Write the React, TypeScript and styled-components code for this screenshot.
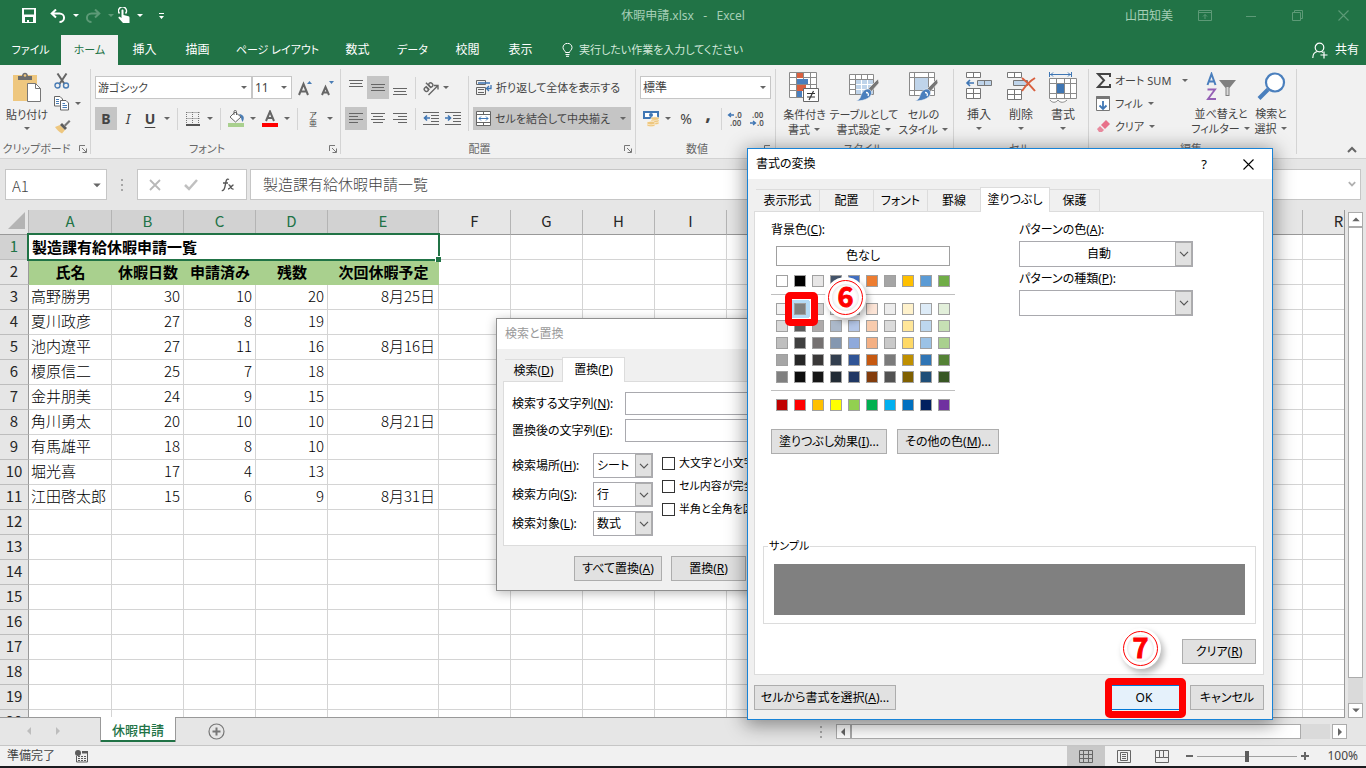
import React from "react";
import styled, { createGlobalStyle, css } from "styled-components";

const GlobalStyle = createGlobalStyle`
  *, *::before, *::after { box-sizing: border-box; }
  html, body { margin: 0; height: 100%; }
  body {
    font-family: "Noto Sans", "Noto Sans CJK JP", sans-serif;
    font-size: 12px;
    line-height: 16px;
    color: #444;
    font-feature-settings: "palt";
    overflow: hidden;
  }
  button, input, select {
    font: inherit;
    font-feature-settings: inherit;
    color: inherit;
    margin: 0;
    padding: 0;
    border: 0;
    border-radius: 0;
    background: none;
    outline: none;
  }
  svg { display: block; flex: none; }
`;

/* ---------- shell ---------- */

const Shell = styled.div`
  position: relative;
  display: flex;
  flex-direction: column;
  height: 100vh;
  overflow: hidden;
  background: #e6e6e6;
  border-bottom: 2px solid #1b1b1f;
`;

const TitleBar = styled.header`
  display: flex;
  align-items: center;
  height: 35px;
  padding-bottom: 4px;
  background: #217346;
  color: #a6cfb6;
  font-size: 12px;
`;

const TitleSide = styled.div<{ $end?: boolean }>`
  display: flex;
  flex: 1;
  align-items: center;
  padding-left: 14px;
  justify-content: ${(p) => (p.$end ? "flex-end" : "flex-start")};
`;

const TitleText = styled.h1`
  margin: 0;
  font-size: 12px;
  font-weight: 400;
  white-space: pre;
`;

const TitleButton = styled.button<{ $w: number; $dim?: boolean }>`
  display: flex;
  align-items: center;
  justify-content: center;
  width: ${(p) => p.$w}px;
  height: 26px;
  color: ${(p) => (p.$dim ? "#5d9a77" : "#fff")};
`;

const UserName = styled.span`
  margin-right: 9px;
`;

const TabBar = styled.nav`
  display: flex;
  align-items: stretch;
  height: 30px;
  background: #217346;
  color: #fff;
`;

const RibbonTab = styled.button<{ $w: number; $active?: boolean; $kana?: boolean }>`
  width: ${(p) => p.$w}px;
  font-size: ${(p) => (p.$kana ? 11 : 12)}px;
  white-space: nowrap;
  text-align: center;
  ${(p) => p.$active && css`background: #f1f1f1; color: #217346;`}
`;

const TellMe = styled.button`
  display: flex;
  align-items: center;
  gap: 6px;
  margin-left: 15px;
  font-size: 11px;
  color: #d3e8da;
  white-space: nowrap;
`;

const Share = styled.button`
  display: flex;
  align-items: center;
  gap: 7px;
  margin-left: auto;
  padding-right: 7px;
`;

/* ---------- ribbon ---------- */

const Ribbon = styled.section`
  display: flex;
  flex: none;
  height: 94px;
  padding: 4px 0;
  background: #f1f1f1;
  border-bottom: 1px solid #d2d2d2;
`;

const Group = styled.div<{ $w: number }>`
  display: flex;
  flex: none;
  flex-direction: column;
  justify-content: space-between;
  width: ${(p) => p.$w}px;
  height: 85px;
  border-right: 1px solid #d4d4d4;
`;

const GroupBody = styled.div<{ $pad?: number }>`
  display: flex;
  padding-left: ${(p) => p.$pad ?? 4}px;
`;

const GroupLabel = styled.div`
  display: flex;
  align-items: center;
  height: 11px;
  padding-right: 3px;
  font-size: 11px;
  color: #666;
`;

const GroupName = styled.span<{ $launch?: boolean }>`
  flex: 1;
  padding-right: ${(p) => (p.$launch ? 6 : 0)}px;
  text-align: center;
  white-space: nowrap;
`;

const ToolRows = styled.div`
  display: flex;
  flex-direction: column;
  gap: 8px;
  padding-top: 7px;
`;

const ToolRow = styled.div`
  display: flex;
  align-items: center;
  height: 23px;
`;

const Tool = styled.button<{ $w?: number; $active?: boolean; $raise?: boolean }>`
  display: flex;
  flex: none;
  align-items: center;
  justify-content: center;
  width: ${(p) => p.$w ?? 22}px;
  height: 23px;
  padding-bottom: ${(p) => (p.$raise ? 12 : 0)}px;
  background: ${(p) => (p.$active ? "#c5c5c5" : "transparent")};
`;

const Glyph = styled.span<{ $size?: number; $bold?: boolean; $italic?: boolean; $under?: boolean }>`
  font-family: "Noto Sans", sans-serif;
  font-size: ${(p) => p.$size ?? 14}px;
  font-weight: ${(p) => (p.$bold ? 700 : 400)};
  font-style: ${(p) => (p.$italic ? "italic" : "normal")};
  text-decoration: ${(p) => (p.$under ? "underline" : "none")};
  text-underline-offset: 3px;
`;

const Rule = styled.span<{ $m?: number; $tall?: boolean }>`
  flex: none;
  width: 1px;
  height: ${(p) => (p.$tall ? 55 : 22)}px;
  margin: 0 ${(p) => p.$m ?? 4}px;
  background: #d4d4d4;
`;

const WideTool = styled.button<{ $w?: number; $active?: boolean }>`
  display: flex;
  align-items: center;
  gap: 4px;
  width: ${(p) => (p.$w ? `${p.$w}px` : "auto")};
  height: 23px;
  padding: 0 4px 0 3px;
  font-size: 11px;
  white-space: nowrap;
  background: ${(p) => (p.$active ? "#c5c5c5" : "transparent")};
`;

const ToolText = styled.span`
  flex: 1;
  text-align: left;
`;

const ComboBox = styled.div<{ $w: number }>`
  display: flex;
  align-items: center;
  width: ${(p) => p.$w}px;
  height: 23px;
  padding-right: 3px;
  background: #fff;
  border: 1px solid #c6c6c6;
`;

const ComboSelect = styled.select<{ $kana?: boolean }>`
  flex: 1;
  min-width: 0;
  height: 100%;
  padding-left: 2px;
  font-size: ${(p) => (p.$kana ? 11 : 12)}px;
  appearance: none;
`;

const BigTool = styled.button<{ $w: number; $kana?: boolean }>`
  display: flex;
  flex: none;
  flex-direction: column;
  align-items: center;
  width: ${(p) => p.$w}px;
  padding-top: 3px;
  font-size: ${(p) => (p.$kana ? 11 : 12)}px;
  line-height: 15px;
  white-space: nowrap;
`;

const BigCaption = styled.span`
  display: flex;
  flex-direction: column;
  align-items: center;
  margin-top: 4px;
`;

const CaptionLine = styled.span`
  display: flex;
  align-items: center;
  gap: 3px;
  min-height: 14px;
`;

const SmallStack = styled.div<{ $w: number }>`
  display: flex;
  flex-direction: column;
  width: ${(p) => p.$w}px;
  font-size: 11px;
`;

const StackTool = styled.button`
  display: flex;
  align-items: center;
  gap: 4px;
  height: 23px;
  padding-right: 5px;
  white-space: nowrap;
`;

const Collapse = styled.button`
  align-self: flex-end;
  margin-left: auto;
  padding: 0 9px 1px 0;
`;

/* ---------- formula bar ---------- */

const FormulaRow = styled.section`
  display: flex;
  flex: none;
  align-items: center;
  height: 51px;
  padding: 0 5px;
`;

const NameBox = styled.div`
  display: flex;
  align-items: center;
  width: 102px;
  height: 31px;
  padding: 2px 4px 0 6px;
  background: #fff;
  border: 1px solid #c6c6c6;
`;

const NameInput = styled.input`
  flex: 1;
  min-width: 0;
  font-family: "Noto Sans CJK JP", sans-serif;
  font-size: 15px;
  font-weight: 300;
`;

const DotGrip = styled.span<{ $flush?: boolean }>`
  display: flex;
  flex-direction: column;
  gap: 3px;
  width: 2px;
  margin: 0 14px 0 ${(p) => (p.$flush ? 2 : 14)}px;
`;

const Dot = styled.i`
  width: 2px;
  height: 2px;
  background: #a6a6a6;
`;

const FormulaTools = styled.div`
  display: flex;
  align-items: center;
  justify-content: space-around;
  width: 110px;
  height: 31px;
  margin-right: 3px;
  background: #fff;
  border: 1px solid #c6c6c6;
`;

const FormulaBox = styled.div`
  display: flex;
  flex: 1;
  align-items: center;
  height: 31px;
  padding: 0 4px 2px 12px;
  background: #fff;
  border: 1px solid #c6c6c6;
`;

const FormulaInput = styled.input`
  flex: 1;
  min-width: 0;
  font-family: "Noto Sans CJK JP", sans-serif;
  font-size: 15px;
  font-weight: 300;
  font-feature-settings: normal;
`;

/* ---------- sheet ---------- */

const Workspace = styled.main`
  display: flex;
  flex: 1;
  min-height: 0;
`;

const GridView = styled.div`
  flex: 1;
  min-width: 0;
  overflow: hidden;
  border-right: 1px solid #999;
  border-bottom: 1px solid #999;
`;

const Sheet = styled.table`
  width: 1375px;
  table-layout: fixed;
  border-collapse: separate;
  border-spacing: 0;
  font-family: "Noto Sans CJK JP", sans-serif;
  font-size: 15px;
  font-weight: 300;
  line-height: 20px;
  font-feature-settings: normal;
  color: #000;
  background: #fff;
`;

const Col = styled.col<{ $w: number }>`
  width: ${(p) => p.$w}px;
`;

const Row = styled.tr`
  height: 25px;
`;

const headCell = css<{ $on?: boolean }>`
  padding: 0 0 2px;
  font-weight: 400;
  text-align: center;
  color: ${(p) => (p.$on ? "#217346" : "#262626")};
  background: ${(p) => (p.$on ? "#d2d2d2" : "#e6e6e6")};
`;

const ColHead = styled.th<{ $on?: boolean }>`
  ${headCell}
  border-right: 1px solid #b4b4b4;
  border-bottom: 1px solid #999;
`;

const RowHead = styled.th<{ $on?: boolean }>`
  ${headCell}
  border-right: 1px solid #999;
  border-bottom: 1px solid #bdbdbd;
`;

const Corner = styled.th`
  padding: 0 3px 3px 8px;
  background: #e6e6e6;
  border-right: 1px solid #b4b4b4;
  border-bottom: 1px solid #999;
`;

const Cell = styled.td<{ $align?: "left" | "right" | "center" }>`
  padding: 0 3px 2px 2px;
  text-align: ${(p) => p.$align ?? "left"};
  white-space: nowrap;
  border-right: 1px solid #d4d4d4;
  border-bottom: 1px solid #d4d4d4;
`;

const TitleCell = styled.td`
  position: relative;
  padding: 0 3px 2px;
  font-weight: 700;
`;

const HeadingCell = styled.td`
  padding: 0 0 2px;
  font-weight: 700;
  text-align: center;
  white-space: nowrap;
  background: #a9d08e;
`;

const Selection = styled.span`
  position: absolute;
  inset: -2px -1px -1px -2px;
  border: 2px solid #217346;
`;

const FillHandle = styled.span`
  position: absolute;
  right: -2px;
  bottom: -2px;
  width: 6px;
  height: 6px;
  background: #217346;
  border-top: 1px solid #fff;
  border-left: 1px solid #fff;
`;

const VScroll = styled.div`
  display: flex;
  flex: none;
  flex-direction: column;
  width: 15px;
  margin: 2px 3px 0 3px;
  background: #dadada;
`;

const ScrollButton = styled.button`
  display: flex;
  flex: none;
  align-items: center;
  justify-content: center;
  width: 15px;
  height: 15px;
  background: #fff;
  border: 1px solid #ababab;
`;

const VThumb = styled.div`
  flex: 1;
  margin-bottom: 25px;
  background: #fff;
  border: 1px solid #ababab;
`;

const SheetBar = styled.footer`
  display: flex;
  flex: none;
  align-items: flex-start;
  height: 27px;
`;

const SheetNav = styled.div`
  display: flex;
  align-items: center;
  gap: 20px;
  width: 100px;
  height: 26px;
  padding-left: 26px;
`;

const SheetTab = styled.button`
  position: relative;
  width: 76px;
  height: 25px;
  margin-top: -1px;
  font-size: 13px;
  font-weight: 500;
  color: #217346;
  background: #fff;
  border: solid #999;
  border-width: 0 1px;
  box-shadow: inset 0 -2px #217346;
`;

const AddSheet = styled.button`
  margin: 5px 0 0 32px;
`;

const HScroll = styled.div`
  display: flex;
  align-items: center;
  width: 529px;
  height: 15px;
  margin: 6px 19px 0 auto;
`;

const HTrack = styled.div`
  flex: 1;
  height: 15px;
  margin-right: 2px;
  padding-right: 29px;
  background: #dadada;
`;

const HThumb = styled.div`
  height: 15px;
  background: #fff;
  border: 1px solid #ababab;
`;

const StatusBar = styled.footer`
  display: flex;
  flex: none;
  align-items: center;
  height: 21px;
  padding: 0 8px 0 7px;
  background: #f1f1f1;
  border-top: 1px solid #c6c6c6;
`;

const StatusText = styled.span`
  margin-right: 20px;
`;

const StatusTools = styled.div`
  display: flex;
  align-items: center;
  height: 100%;
  margin-left: auto;
`;

const ViewButton = styled.button<{ $on?: boolean }>`
  display: flex;
  align-items: center;
  justify-content: center;
  width: 38px;
  height: 20px;
  background: ${(p) => (p.$on ? "#c8c8c8" : "transparent")};
`;

const ZoomSlider = styled.input`
  width: 100px;
  height: 14px;
  margin: 0 4px;
  appearance: none;
  background: linear-gradient(#a0a0a0, #a0a0a0) center / 100% 1px no-repeat;
  &::-webkit-slider-thumb {
    appearance: none;
    width: 4px;
    height: 11px;
    background: #5c5c5c;
  }
`;

const ZoomValue = styled.span`
  width: 49px;
  text-align: right;
`;

/* ---------- dialogs ---------- */

const DialogWindow = styled.section<{ $x: number; $y: number; $w: number; $front?: boolean }>`
  position: absolute;
  left: ${(p) => p.$x}px;
  top: ${(p) => p.$y}px;
  width: ${(p) => p.$w}px;
  color: #000;
  background: #f0f0f0;
  border: 1px solid ${(p) => (p.$front ? "#1883d7" : "#8f8f8f")};
  box-shadow: ${(p) => (p.$front ? "0 3px 18px 2px rgba(0,0,0,.42)" : "0 2px 10px rgba(0,0,0,.28)")};
`;

const DialogTitle = styled.header<{ $dim?: boolean }>`
  display: flex;
  align-items: center;
  height: 30px;
  padding: 0 18px 0 8px;
  background: #fff;
  color: ${(p) => (p.$dim ? "#999" : "#000")};
`;

const DialogName = styled.h2`
  flex: 1;
  margin: 0;
  font-size: 12px;
  font-weight: 400;
`;

const TitleControls = styled.div`
  display: flex;
  align-items: center;
  gap: 36px;
  font-size: 13px;
`;

const DialogBody = styled.div`
  padding: 8px 8px 9px 6px;
`;

const DialogTabs = styled.div`
  display: flex;
  align-items: flex-end;
  height: 24px;
  padding-left: 2px;
`;

const DialogTab = styled.button<{ $w: number; $on?: boolean }>`
  position: relative;
  width: ${(p) => p.$w}px;
  height: 22px;
  white-space: nowrap;
  border: solid #dcdcdc;
  border-width: 1px 1px 0 0;
  ${(p) =>
    p.$on &&
    css`
      height: 25px;
      margin: 0 0 -1px -1px;
      background: #fff;
      border-left-width: 1px;
    `}
`;

const Panel = styled.div`
  display: flex;
  flex-direction: column;
  padding: 10px 7px 9px 8px;
  background: #fff;
  border: 1px solid #dcdcdc;
`;

const FillOptions = styled.div`
  display: flex;
  padding-left: 8px;
`;

const FillLeft = styled.div`
  width: 248px;
`;

const FieldLabel = styled.label`
  display: block;
  white-space: nowrap;
`;

const NoColor = styled.button`
  display: block;
  width: 174px;
  height: 20px;
  margin: 8px 0 9px 5px;
  background: #fff;
  border: 1px solid #a0a0a0;
`;

const SwatchGrid = styled.div`
  display: grid;
  grid-template-columns: repeat(10, 12px);
  gap: 5px 6px;
  padding-left: 5px;
`;

const Swatch = styled.button<{ $c: string; $on?: boolean }>`
  width: 12px;
  height: 12px;
  background: ${(p) => p.$c};
  border: 1px solid #a0a0a0;
  ${(p) => p.$on && css`box-shadow: 2px 0 0 2px #b5dbf7, 0 0 0 3px #b5dbf7;`}
`;

const Divider = styled.hr`
  width: 184px;
  height: 1px;
  margin: 7px 0 8px;
  background: #bfbfbf;
  border: 0;
`;

const ButtonLine = styled.div`
  display: flex;
  gap: 10px;
  margin-top: 18px;
`;

const PushButton = styled.button<{ $w: number; $hot?: boolean }>`
  flex: none;
  width: ${(p) => p.$w}px;
  height: 25px;
  white-space: nowrap;
  background: ${(p) => (p.$hot ? "#e5f1fb" : "#e1e1e1")};
  border: 1px solid ${(p) => (p.$hot ? "#0078d7" : "#adadad")};
`;

const DropBox = styled.div<{ $w: number; $h: number }>`
  display: flex;
  width: ${(p) => p.$w}px;
  height: ${(p) => p.$h}px;
  background: #fff;
  border: 1px solid #a9a9ae;
`;

const DropSelect = styled.select<{ $center?: boolean }>`
  flex: 1;
  min-width: 0;
  padding-left: 3px;
  appearance: none;
  text-align-last: ${(p) => (p.$center ? "center" : "left")};
`;

const DropArrow = styled.span`
  display: flex;
  align-items: center;
  justify-content: center;
  width: 17px;
  background: #e1e1e1;
  border: 1px solid #adadad;
`;

const PatternFields = styled.div`
  display: flex;
  flex-direction: column;
  gap: 4px;
`;

const PatternField = styled.div`
  display: flex;
  flex-direction: column;
  gap: 3px;
`;

const SampleBox = styled.fieldset`
  margin: 84px 0 15px;
  padding: 10px 10px 8px;
  border: 1px solid #dcdcdc;
`;

const SampleLegend = styled.legend`
  margin-left: -6px;
  padding: 0 1px;
  font-size: 11px;
`;

const SampleFill = styled.div`
  height: 51px;
  background: #808080;
`;

const PanelEnd = styled.div`
  display: flex;
  justify-content: flex-end;
  padding-bottom: 1px;
`;

const DialogFooter = styled.div<{ $indent?: number }>`
  display: flex;
  gap: 9px;
  margin-top: 10px;
  padding-left: ${(p) => p.$indent ?? 0}px;
`;

const Spacer = styled.span`
  flex: 1;
`;

const FindStack = styled.div`
  display: flex;
  flex-direction: column;
  gap: 4px;
`;

const FindField = styled.div`
  display: flex;
  align-items: center;
`;

const FindLabel = styled.label<{ $w: number }>`
  width: ${(p) => p.$w}px;
  white-space: nowrap;
`;

const TextField = styled.input`
  width: 380px;
  height: 23px;
  background: #fff;
  border: 1px solid #a9a9ae;
`;

const FindOptions = styled.div`
  display: flex;
  gap: 9px;
  margin-top: 11px;
`;

const Checks = styled.div`
  display: flex;
  flex-direction: column;
  gap: 7px;
  padding-top: 2px;
  font-size: 11px;
`;

const CheckLabel = styled.label`
  display: flex;
  align-items: center;
  gap: 4px;
  white-space: nowrap;
`;

const CheckBox = styled.input`
  width: 13px;
  height: 13px;
  appearance: none;
  background: #fff;
  border: 1px solid #333;
`;

/* ---------- step annotations over the dialog ---------- */

const RedFrame = styled.span<{ $x: number; $y: number; $w: number; $h: number }>`
  position: absolute;
  left: ${(p) => p.$x}px;
  top: ${(p) => p.$y}px;
  width: ${(p) => p.$w}px;
  height: ${(p) => p.$h}px;
  border: 7px solid #f00;
  border-radius: 5px;
  pointer-events: none;
`;

const StepBadge = styled.span<{ $x: number; $y: number }>`
  position: absolute;
  left: ${(p) => p.$x}px;
  top: ${(p) => p.$y}px;
  display: flex;
  align-items: center;
  justify-content: center;
  width: 35px;
  height: 35px;
  padding-bottom: 3px;
  font-family: "Noto Sans CJK JP", sans-serif;
  font-size: 27px;
  font-weight: 700;
  line-height: 30px;
  color: #f00;
  background: #fff;
  border: 1px solid #f00;
  border-radius: 50%;
  -webkit-text-stroke: 1px #f00;
  box-shadow: 0 0 0 3px #fff, 3px 4px 6px 3px rgba(0,0,0,.28), inset 0 0 0 3px #fff, inset 0 0 3px 4px #e6e6e6;
`;

/* ---------- icons ---------- */

type CaretProps = { c?: string; dir?: "down" | "up" | "left" | "right"; big?: boolean };
const Caret = ({ c = "#666", dir = "down", big }: CaretProps) => {
  const paths = { down: "M1 2h6L4 5z", up: "M1 5h6L4 2z", left: "M5 0v8L1 4z", right: "M2 0v8l4-4z" };
  return (
    <svg width={big ? 10 : 8} height={big ? 10 : 8} viewBox="0 0 8 8">
      <path fill={c} d={paths[dir]} />
    </svg>
  );
};

const Chevron = ({ c = "#555", w = 10, bold }: { c?: string; w?: number; bold?: boolean }) => (
  <svg width={w} height="6" viewBox="0 0 10 6" fill="none" stroke={c} strokeWidth={bold ? 2.2 : 1.2}>
    <path d="M1 .8l4 4 4-4" />
  </svg>
);

const Launcher = () => (
  <svg width="8" height="8" viewBox="0 0 8 8" fill="none" stroke="#777">
    <path d="M.5 6V.5H6M3 3l4 4M7.500 3.500v4h-4" />
  </svg>
);

const SaveIcon = () => (
  <svg width="15" height="15" viewBox="0 0 15 15" fill="#fff" fillRule="evenodd">
    <path d="M0 0h14v15H0zM2 1.500v5h10v-5zM3 9v5h2v-2h2v2h4V9z" />
  </svg>
);

const UndoIcon = ({ flip }: { flip?: boolean }) => (
  <svg width="16" height="14" viewBox="0 0 16 14" fill="none" stroke="currentColor" strokeWidth="2">
    <path d={flip ? "M14 4.500H6.500a4.300 4 0 0 0 0 8.500M10 .5l4.300 4-4.300 4" : "M2 4.500h7.500a4.300 4 0 0 1 0 8.500M6 .5L1.700 4.500l4.300 4"} />
  </svg>
);

const TouchIcon = () => (
  <svg width="12" height="17" viewBox="0 0 12 17">
    <path d="M1.500 6.500a4 4 0 1 1 6 0" fill="none" stroke="#fff" strokeWidth="1.500" />
    <path d="M3.500 3.500c0-1.300 2-1.300 2 0V8l5 1.300c.8.3 1 .8 1 1.600V16H5L.5 11c-.3-1 .8-1.600 1.700-1l1.300 1z" fill="#fff" />
  </svg>
);

const CustomizeIcon = () => (
  <svg width="7" height="8" viewBox="0 0 7 8" fill="#fff"><path d="M1 1h5v1H1zM1 4h5L3.500 7z" /></svg>
);

const RibbonDisplayIcon = () => (
  <svg width="14" height="11" viewBox="0 0 14 11" fill="none" stroke="currentColor">
    <path d="M.5.5h13v10H.5zM.5 2.500h13M7 9V4.500M5 6.500l2-2 2 2" />
  </svg>
);
const MinimizeIcon = () => (
  <svg width="10" height="10" viewBox="0 0 10 10" stroke="currentColor"><path d="M0 5.500h10" /></svg>
);
const RestoreIcon = () => (
  <svg width="11" height="11" viewBox="0 0 11 11" fill="none" stroke="currentColor">
    <path d="M.5 2.500h8v8h-8zM2.500 2.500v-2h8v8h-2" />
  </svg>
);
const CloseIcon = ({ c = "currentColor" }: { c?: string }) => (
  <svg width="11" height="11" viewBox="0 0 11 11" stroke={c} strokeWidth="1.100"><path d="M.5.5l10 10M10.500.5l-10 10" /></svg>
);

const BulbIcon = () => (
  <svg width="11" height="14" viewBox="0 0 11 14" fill="none" stroke="#fff">
    <path d="M3.500 9.500c0-1.500-2.500-2.500-2.500-5a4.300 4 0 0 1 9 0c0 2.500-2.500 3.500-2.500 5zM3.500 11.500h4M4 13.300h3" />
  </svg>
);

const ShareIcon = () => (
  <svg width="16" height="17" viewBox="0 0 16 17" fill="none" stroke="#fff" strokeWidth="1.200">
    <circle cx="7.500" cy="5.500" r="4.300" />
    <path d="M.8 16c0-4 2-6 4.700-6.500M9.500 9.500l1.500 1M12 9.500v7M8.500 13h7" />
  </svg>
);

const PasteIcon = () => (
  <svg width="30" height="31" viewBox="0 0 30 31">
    <path d="M1 3h24v26H1z" fill="#eec77f" />
    <path d="M6 8V4h4c0-4.500 6-4.500 6 0h4v4z" fill="#6d6d6d" />
    <circle cx="13" cy="3.500" r="1.300" fill="#eec77f" />
    <path d="M15.500 11.500h8l5 5v13h-13z" fill="#fff" stroke="#777" />
    <path d="M23.500 11.500v5h5" fill="none" stroke="#777" />
  </svg>
);
const CutIcon = () => (
  <svg width="16" height="16" viewBox="0 0 16 16" fill="none">
    <path d="M3.500.5L10.500 11M12.500.5L5.500 11" stroke="#666" strokeWidth="2" />
    <circle cx="3.500" cy="12.500" r="2.500" stroke="#4a7db5" strokeWidth="1.400" />
    <circle cx="12" cy="12.500" r="2.500" stroke="#4a7db5" strokeWidth="1.400" />
  </svg>
);
const CopyIcon = () => (
  <svg width="16" height="15" viewBox="0 0 16 15" fill="#fff" stroke="#666">
    <path d="M.5.5H6l2.500 2.500v7h-8z" /><path d="M2 3.500h3M2 5.500h3M2 7.500h3" stroke="#4a7db5" />
    <path d="M6.500 4.500H12l2.500 2.500v7h-8z" /><path d="M8.500 7.500H11M8.500 9.500h4.500M8.500 11.500h4.500" stroke="#4a7db5" />
  </svg>
);
const PainterIcon = () => (
  <svg width="17" height="15" viewBox="0 0 17 15">
    <path d="M1 8l5-2 5 5-3 3.500C5 13 3 11 1 8z" fill="#eec77f" />
    <path d="M6 6l2-2 5 5-2 2z" fill="#5d5d5d" /><path d="M10 6l5-5 1.500 1.500-5 5z" fill="#777" />
  </svg>
);

const GrowA = ({ down }: { down?: boolean }) => (
  <svg width="16" height="16" viewBox="0 0 16 16">
    <path d={down ? "M2 15L5.500 7l3.500 8M3 12.500h5" : "M1 15L5.500 4l4.500 11M2.500 11.500h6"} fill="none" stroke="#666" strokeWidth="2" />
    <path d={down ? "M9 1h5l-2.500 3z" : "M9 4h5l-2.500-3z"} fill="#4a7db5" />
  </svg>
);
const BordersIcon = () => (
  <svg width="14" height="14" viewBox="0 0 14 14" fill="none" stroke="#777">
    <path d="M.5.5h13M.5 6.500h13M.5 0v13M6.500 0v13M12.500 0v13" strokeDasharray="1 1" /><path d="M0 13h14" stroke="#555" strokeWidth="2" />
  </svg>
);
const BucketIcon = () => (
  <svg width="17" height="17" viewBox="0 0 17 17">
    <path d="M2 7l5-5 6 5-5.500 5z" fill="#fff" stroke="#666" /><path d="M6 5V1.500c0-1.500 2.500-1.500 2.500 0V5" fill="none" stroke="#666" />
    <path d="M11 4c5 .5 6 4 3.500 8-1-2-1.500-4-1.500-5z" fill="#4a7db5" /><path d="M0 13h16v4H0z" fill="#a9d08e" />
  </svg>
);
const FontColorIcon = () => (
  <svg width="16" height="17" viewBox="0 0 16 17">
    <path d="M4 11L8 1.500l4 9.500M5.500 8h5" fill="none" stroke="#666" strokeWidth="2" /><path d="M0 13h16v4H0z" fill="#f00" />
  </svg>
);
const RubyStack = styled.span`
  display: flex;
  flex-direction: column;
  align-items: center;
  font-size: 8px;
  line-height: 8px;
`;

type LinesProps = { rows: [number, number][]; top?: number };
const Lines = ({ rows, top = 2 }: LinesProps) => (
  <svg width="14" height="15" viewBox="0 0 14 15" stroke="#666">
    {rows.map(([a, b], i) => (
      <path key={i} d={`M${a} ${top + i * 3 + 0.5}H${b}`} />
    ))}
  </svg>
);
const full: [number, number][] = [[0, 14], [1, 13], [0, 14]];

const OrientIcon = () => (
  <svg width="18" height="18" viewBox="0 0 18 18" fill="none" stroke="#666" strokeWidth="1.400">
    <path d="M6.500 16L15.500 7M16 10.500V6.500h-4" />
    <g transform="rotate(-45 6 8)">
      <ellipse cx="3" cy="8.500" rx="1.800" ry="2.200" /><path d="M5 5.800V11" />
      <ellipse cx="9.500" cy="8.500" rx="1.800" ry="2.200" /><path d="M7.600 3.500V11" />
    </g>
  </svg>
);
const IndentIcon = ({ out }: { out?: boolean }) => (
  <svg width="16" height="14" viewBox="0 0 16 14" fill="none">
    <path d="M0 .5h16M8 3.500h8M8 6.500h8M8 9.500h8M0 12.500h16" stroke="#666" />
    <path d={out ? "M7 6H1.500M4 3.500L1.500 6 4 8.500" : "M0 6h5.500M3 3.500L5.500 6 3 8.500"} stroke="#3f76b4" strokeWidth="1.600" />
  </svg>
);
const WrapIcon = () => (
  <svg width="16" height="16" viewBox="0 0 16 16" fill="none">
    <path d="M.5.5h9v4h-9zM.5 7.500h9v7h-9zM2 9.500h6M2 12.500h6" stroke="#666" />
    <path d="M2 3h12M15 5v3.500H11M13 6l-2.500 2.500L13 11" stroke="#3f76b4" strokeWidth="1.300" />
  </svg>
);
const MergeIcon = () => (
  <svg width="15" height="16" viewBox="0 0 15 16" fill="#fff" stroke="#666">
    <path d="M.5.5h14v14H.5zM.5 3.500h14M.5 11.500h14M7.500.5v3M7.500 11.500v3" />
    <path d="M3 7.500h9M5 5.500l-2 2 2 2M10 5.500l2 2-2 2" fill="none" stroke="#3f76b4" />
  </svg>
);
const CurrencyIcon = () => (
  <svg width="17" height="16" viewBox="0 0 17 16">
    <path d="M0 0h16v8H0z" fill="#3f76b4" /><path d="M2 2h12v4H2z" fill="#fff" /><circle cx="8" cy="4" r="2" fill="#3f76b4" />
    <g fill="#eec77f" stroke="#fff" strokeWidth=".5">
      <ellipse cx="12" cy="12" rx="4.200" ry="1.800" /><ellipse cx="12" cy="9.800" rx="4.200" ry="1.800" /><ellipse cx="12" cy="7.600" rx="4.200" ry="1.800" />
      <ellipse cx="8" cy="14" rx="4.200" ry="1.800" /><ellipse cx="8" cy="12" rx="4.200" ry="1.800" />
    </g>
  </svg>
);
const DecimalIcon = ({ less }: { less?: boolean }) => (
  <svg width="18" height="20" viewBox="0 0 18 20" fontFamily="Noto Sans" fontSize="8" fontWeight="600" fill="#555">
    <text x={less ? 3 : 8} y="9">{less ? ".00" : ".0"}</text>
    <text x={less ? 8 : 3} y="17">{less ? ".0" : ".00"}</text>
    <path d={less ? "M1 14h5.500M4 12l2.500 2L4 16" : "M7 6H1.500M4 4L1.500 6 4 8"} fill="none" stroke="#3f76b4" strokeWidth="1.300" />
  </svg>
);

const grid = "M.5.5h27v25H.5zM.5 5.500h27M.5 12.500h27M.5 18.500h27M7.500.5v25M14.500.5v25M21.500.5v25";
const CondIcon = () => (
  <svg width="31" height="31" viewBox="0 0 31 31">
    <path d={grid} fill="#fff" stroke="#8a8a8a" />
    <path d="M8 1h6v5H8zM8 13h9v6H8z" fill="#d9603f" /><path d="M8 7h11v5H8zM8 19h5v6H8z" fill="#4a7fbd" />
    <path d="M14.500 16.500h15v13h-15z" fill="#fff" stroke="#666" />
    <path d="M18 21.500h8M18 25h8M24.500 19l-4.500 9" stroke="#333" fill="none" strokeWidth="1.200" />
  </svg>
);
const Brush = () => (
  <>
    <path d="M29 7l1 4-8 9-3-3z" fill="#777" stroke="#f1f1f1" strokeWidth=".6" />
    <path d="M19 17c2 0 4 2 3.500 4.500C22 25 17 29 7 29c5-2 4-4 6-8 1.500-3 4-4 6-4z" fill="#4a7fbd" stroke="#f1f1f1" strokeWidth=".6" />
    <path d="M17 20.500c2 0 3 1.500 2 3.500" fill="none" stroke="#fff" strokeWidth="1.300" />
  </>
);
const TableFormatIcon = () => (
  <svg width="31" height="31" viewBox="0 0 31 31">
    <path d="M.5 2.500h24v20H.5zM.5 7.500h24M.5 12.500h24M.5 17.500h24M6.500 2.500v20M12.500 2.500v20M18.500 2.500v20" fill="#fff" stroke="#8a8a8a" />
    <path d="M7 8h17v14H7z" fill="#bfd4ea" /><path d="M7 12.500h17M7 17.500h17M12.500 8v14M18.500 8v14" stroke="#fff" />
    <Brush />
  </svg>
);
const CellStyleIcon = () => (
  <svg width="31" height="31" viewBox="0 0 31 31">
    <path d="M1.500.5h25v23h-25zM1.500 5.500h25M1.500 18.500h25M6.500.5v23M20.500.5v23" fill="#fff" stroke="#8a8a8a" />
    <path d="M7 6h13v12H7z" fill="#bfd4ea" />
    <Brush />
  </svg>
);
const InsertIcon = () => (
  <svg width="28" height="31" viewBox="0 0 28 31" fill="#fff" stroke="#777">
    <path d="M1.500.5h14v5h-14zM8.500.5v5M1.500 16.500h14v10h-14zM1.500 21.500h14M8.500 16.500v10" />
    <path d="M12.500 8.500h14v5h-14zM19.500 8.500v5" fill="#bfd4ea" />
    <path d="M9 11H2M5 8l-3 3 3 3" fill="none" stroke="#3f76b4" strokeWidth="1.600" />
  </svg>
);
const DeleteIcon = () => (
  <svg width="30" height="31" viewBox="0 0 30 31" fill="#fff" stroke="#777">
    <path d="M1.500.5h14v5h-14zM8.500.5v5M1.500 17.500h14v10h-14zM1.500 22.500h14M8.500 17.500v10" />
    <path d="M7.500 8.500h14v5h-14z" fill="#bfd4ea" />
    <path d="M16 6c4 3 9 8 13 13M29 6c-5 3-9 7-13 13" fill="none" stroke="#d9603f" strokeWidth="2" />
  </svg>
);
const FormatIcon = () => (
  <svg width="29" height="31" viewBox="0 0 29 31" fill="#fff" stroke="#8a8a8a">
    <path d="M.5 6.500h27v20H.5zM.5 11.500h27M.5 21.500h27M7.500 6.500v20M15.500 6.500v20M21.500 6.500v20" />
    <path d="M8 12h7v9H8z" fill="#3f76b4" stroke="none" />
    <path d="M.5 0v5M22.500 0v5M1 2.500h21M4 .5l-2 2 2 2M19 .5l2 2-2 2" fill="none" stroke="#3f76b4" />
    <path d="M1 28c2 3 6 3 8 0 2 3 6 3 9 0" />
  </svg>
);
const SigmaIcon = () => (
  <svg width="15" height="15" viewBox="0 0 15 15" fill="none" stroke="#444" strokeWidth="2">
    <path d="M14 4V1H2l6 6.300L2 14h12v-3" />
  </svg>
);
const FillIcon = () => (
  <svg width="15" height="16" viewBox="0 0 15 16" fill="#fff" stroke="#777">
    <path d="M.5.5h13v14H.5z" /><path d="M.5 1.500h13" strokeWidth="3" />
    <path d="M7 5v8M3.500 9.500L7 13l3.500-3.500" fill="none" stroke="#3f76b4" strokeWidth="1.800" />
  </svg>
);
const EraserIcon = () => (
  <svg width="15" height="14" viewBox="0 0 15 14">
    <path d="M5 5l5-5 4 4-5 5z" fill="#e8718a" /><path d="M4 6l4 4-2 2H3L1 9z" fill="#ea8b9f" />
  </svg>
);
const SortIcon = () => (
  <svg width="30" height="30" viewBox="0 0 30 30" fill="none">
    <path d="M1.500 13L5.500 2l4 11M3 9.500h5" stroke="#4a7fbd" strokeWidth="2" />
    <path d="M1.500 17.500h7.500L2 27h8" stroke="#9560b5" strokeWidth="1.900" />
    <path d="M13 8h17l-6.500 8v8h-4v-8z" fill="#808080" /><path d="M20.500 15h2v8h-2z" fill="#d8d8d8" />
  </svg>
);
const FindIcon = () => (
  <svg width="29" height="30" viewBox="0 0 29 30" fill="none" stroke="#4a7fbd">
    <circle cx="18" cy="10.500" r="9" fill="#fff" strokeWidth="2.200" />
    <path d="M11 17.500L2 26.500" strokeWidth="4" />
  </svg>
);
const MacroIcon = () => (
  <svg width="14" height="13" viewBox="0 0 14 13" fill="#5c5c5c">
    <circle cx="3" cy="3" r="3" /><path d="M7 1h6v2.500H7z" /><path d="M1.500 6v6h11V3" fill="none" stroke="#5c5c5c" />
    <path d="M3 6h2v1H3zM6 6h2v1H6zM9 6h2v1H9zM3 8h2v1H3zM6 8h2v1H6zM9 8h2v1H9zM3 10h2v1H3zM6 10h2v1H6zM9 10h2v1H9z" />
  </svg>
);
const ViewIcon = ({ d }: { d: string }) => (
  <svg width="14" height="13" viewBox="0 0 14 13" fill="none" stroke="#666"><path d={d} /></svg>
);

/* ---------- data ---------- */

const tabs: { name: string; w: number; kana?: boolean }[] = [
  { name: "ファイル", w: 61, kana: true },
  { name: "ホーム", w: 57, kana: true },
  { name: "挿入", w: 53 },
  { name: "描画", w: 53 },
  { name: "ページ レイアウト", w: 107, kana: true },
  { name: "数式", w: 53 },
  { name: "データ", w: 57, kana: true },
  { name: "校閲", w: 53 },
  { name: "表示", w: 53 },
];

const columns = "ABCDEFGHIJKLMNOPQR".split("");
const columnWidth = (i: number) => (i === 0 ? 83 : i === 4 ? 111 : 72);

const people = [
  ["高野勝男", "30", "10", "20", "8月25日"],
  ["夏川政彦", "27", "8", "19", ""],
  ["池内遼平", "27", "11", "16", "8月16日"],
  ["榎原信二", "25", "7", "18", ""],
  ["金井朋美", "24", "9", "15", ""],
  ["角川勇太", "20", "10", "10", "8月21日"],
  ["有馬雄平", "18", "8", "10", ""],
  ["堀光喜", "17", "4", "13", ""],
  ["江田啓太郎", "15", "6", "9", "8月31日"],
];

const baseColors = ["#ffffff", "#000000", "#e7e6e6", "#44546a", "#4472c4", "#ed7d31", "#a5a5a5", "#ffc000", "#5b9bd5", "#70ad47"];
const tintColors = [
  "#f2f2f2", "#808080", "#d0cece", "#d6dce4", "#d9e1f2", "#fce4d6", "#ededed", "#fff2cc", "#ddebf7", "#e2efda",
  "#d9d9d9", "#595959", "#aeaaaa", "#acb9ca", "#b4c6e7", "#f8cbad", "#dbdbdb", "#ffe699", "#bdd7ee", "#c6e0b4",
  "#bfbfbf", "#404040", "#757171", "#8497b0", "#8ea9db", "#f4b084", "#c9c9c9", "#ffd966", "#9bc2e6", "#a9d08e",
  "#a6a6a6", "#262626", "#3a3838", "#333f4f", "#305496", "#c65911", "#7b7b7b", "#bf8f00", "#2f75b5", "#548235",
  "#808080", "#0d0d0d", "#161616", "#222b35", "#203764", "#833c0c", "#525252", "#806000", "#1f4e78", "#375623",
];
const standardColors = ["#c00000", "#ff0000", "#ffc000", "#ffff00", "#92d050", "#00b050", "#00b0f0", "#0070c0", "#002060", "#7030a0"];

/* ---------- composed parts ---------- */

type ComboProps = { label: string; value: string; w: number; kana?: boolean };
const Combo = ({ label, value, w, kana }: ComboProps) => (
  <ComboBox $w={w}>
    <ComboSelect aria-label={label} $kana={kana}><option>{value}</option></ComboSelect>
    <Caret />
  </ComboBox>
);

type DropProps = { id: string; value: string; w: number; h: number; center?: boolean };
const Drop = ({ id, value, w, h, center }: DropProps) => (
  <DropBox $w={w} $h={h}>
    <DropSelect id={id} $center={center}><option>{value}</option></DropSelect>
    <DropArrow><Chevron /></DropArrow>
  </DropBox>
);

type BigProps = { icon: React.ReactNode; w: number; first: string; second?: string; kana?: boolean };
const Big = ({ icon, w, first, second, kana }: BigProps) => (
  <BigTool $w={w} $kana={kana}>
    {icon}
    <BigCaption>
      <span>{first}</span>
      <CaptionLine>{second}<Caret /></CaptionLine>
    </BigCaption>
  </BigTool>
);

const Label = ({ text, launch }: { text: string; launch?: boolean }) => (
  <GroupLabel><GroupName $launch={launch}>{text}</GroupName>{launch ? <Launcher /> : null}</GroupLabel>
);

const Grip = ({ flush }: { flush?: boolean }) => <DotGrip $flush={flush}><Dot /><Dot /><Dot /></DotGrip>;

const Swatches = ({ colors, selected }: { colors: string[]; selected?: number }) => (
  <SwatchGrid>
    {colors.map((c, i) => <Swatch key={i} $c={c} $on={i === selected} aria-label={c} />)}
  </SwatchGrid>
);

const RibbonBar = () => (
  <Ribbon>
    <Group $w={91}>
      <GroupBody $pad={0}>
        <Big w={54} icon={<PasteIcon />} first="貼り付け" kana />
        <SmallStack $w={36}>
          <StackTool aria-label="切り取り"><CutIcon /></StackTool>
          <StackTool aria-label="コピー"><CopyIcon /><Caret /></StackTool>
          <StackTool aria-label="書式のコピー"><PainterIcon /></StackTool>
        </SmallStack>
      </GroupBody>
      <Label text="クリップボード" launch />
    </Group>

    <Group $w={250}>
      <GroupBody>
        <ToolRows>
          <ToolRow>
            <Combo label="フォント" value="游ゴシック" w={157} kana />
            <Combo label="サイズ" value="11" w={40} />
            <Tool $w={27} aria-label="拡大"><GrowA /></Tool>
            <Tool $w={18} aria-label="縮小"><GrowA down /></Tool>
          </ToolRow>
          <ToolRow>
            <Tool $active><Glyph $bold>B</Glyph></Tool>
            <Tool><Glyph $italic>I</Glyph></Tool>
            <Tool><Glyph $bold $under>U</Glyph></Tool>
            <Tool $w={12} aria-label="下線"><Caret /></Tool>
            <Rule />
            <Tool aria-label="罫線"><BordersIcon /></Tool>
            <Tool $w={12} aria-label="罫線の種類"><Caret /></Tool>
            <Rule />
            <Tool aria-label="塗りつぶしの色"><BucketIcon /></Tool>
            <Tool $w={12} aria-label="塗りつぶし"><Caret /></Tool>
            <Tool aria-label="フォントの色"><FontColorIcon /></Tool>
            <Tool $w={12} aria-label="文字色"><Caret /></Tool>
            <Rule />
            <Tool><RubyStack><span>ア</span><span>亜</span></RubyStack></Tool>
            <Tool $w={12} aria-label="ふりがな"><Caret /></Tool>
          </ToolRow>
        </ToolRows>
      </GroupBody>
      <Label text="フォント" launch />
    </Group>

    <Group $w={295}>
      <GroupBody>
        <ToolRows>
          <ToolRow>
            <Tool aria-label="上揃え"><Lines rows={full} top={0} /></Tool>
            <Tool $active aria-label="上下中央揃え"><Lines rows={full} top={4} /></Tool>
            <Tool aria-label="下揃え"><Lines rows={full} top={8} /></Tool>
            <Rule />
            <Tool $w={22} aria-label="方向"><OrientIcon /></Tool>
            <Tool $w={8} aria-label="方向の種類"><Caret /></Tool>
          </ToolRow>
          <ToolRow>
            <Tool $active aria-label="左揃え"><Lines rows={[[0, 14], [0, 9], [0, 14], [0, 9]]} /></Tool>
            <Tool aria-label="中央揃え"><Lines rows={[[0, 14], [2, 12], [0, 14], [2, 12]]} /></Tool>
            <Tool aria-label="右揃え"><Lines rows={[[0, 14], [5, 14], [0, 14], [5, 14]]} /></Tool>
            <Rule />
            <Tool aria-label="インデントを減らす"><IndentIcon out /></Tool>
            <Tool aria-label="インデントを増やす"><IndentIcon /></Tool>
          </ToolRow>
        </ToolRows>
        <ToolRows><Rule $tall /></ToolRows>
        <ToolRows>
          <WideTool><WrapIcon /><ToolText>折り返して全体を表示する</ToolText></WideTool>
          <WideTool $w={158} $active><MergeIcon /><ToolText>セルを結合して中央揃え</ToolText><Caret /></WideTool>
        </ToolRows>
      </GroupBody>
      <Label text="配置" launch />
    </Group>

    <Group $w={140}>
      <GroupBody>
        <ToolRows>
          <Combo label="表示形式" value="標準" w={131} />
          <ToolRow>
            <Tool aria-label="通貨"><CurrencyIcon /></Tool>
            <Tool $w={12} aria-label="通貨の種類"><Caret /></Tool>
            <Tool $w={24}><Glyph>%</Glyph></Tool>
            <Tool $w={20} $raise><Glyph $size={20} $bold>,</Glyph></Tool>
            <Rule $m={3} />
            <Tool aria-label="小数点以下を増やす"><DecimalIcon /></Tool>
            <Tool aria-label="小数点以下を減らす"><DecimalIcon less /></Tool>
          </ToolRow>
        </ToolRows>
      </GroupBody>
      <Label text="数値" launch />
    </Group>

    <Group $w={178}>
      <GroupBody $pad={0}>
        <Big w={57} icon={<CondIcon />} first="条件付き" second="書式" kana />
        <Big w={62} icon={<TableFormatIcon />} first="テーブルとして" second="書式設定" kana />
        <Big w={57} icon={<CellStyleIcon />} first="セルの" second="スタイル" kana />
      </GroupBody>
      <Label text="スタイル" />
    </Group>

    <Group $w={135}>
      <GroupBody>
        <Big w={42} icon={<InsertIcon />} first="挿入" />
        <Big w={42} icon={<DeleteIcon />} first="削除" />
        <Big w={42} icon={<FormatIcon />} first="書式" />
      </GroupBody>
      <Label text="セル" />
    </Group>

    <Group $w={208}>
      <GroupBody $pad={7}>
        <SmallStack $w={98}>
          <StackTool><SigmaIcon /><ToolText>オート SUM</ToolText><Caret /></StackTool>
          <StackTool><FillIcon />フィル<Caret /></StackTool>
          <StackTool><EraserIcon />クリア<Caret /></StackTool>
        </SmallStack>
        <Big w={54} icon={<SortIcon />} first="並べ替えと" second="フィルター" kana />
        <Big w={46} icon={<FindIcon />} first="検索と" second="選択" kana />
      </GroupBody>
      <Label text="編集" />
    </Group>

    <Collapse aria-label="リボンを折りたたむ">
      <svg width="10" height="7" viewBox="0 0 10 7" fill="none" stroke="#666" strokeWidth="2"><path d="M1 6l4-4 4 4" /></svg>
    </Collapse>
  </Ribbon>
);

const Spreadsheet = () => (
  <Sheet>
    <colgroup>
      <Col $w={29} />
      {columns.map((c, i) => <Col key={c} $w={columnWidth(i)} />)}
    </colgroup>
    <thead>
      <Row>
        <Corner><svg width="17" height="17" viewBox="0 0 17 17"><path d="M17 0v17H0z" fill="#b4b4b4" /></svg></Corner>
        {columns.map((c, i) => <ColHead key={c} $on={i < 5}>{c}</ColHead>)}
      </Row>
    </thead>
    <tbody>
      <Row>
        <RowHead $on>1</RowHead>
        <TitleCell colSpan={5}>製造課有給休暇申請一覧<Selection /><FillHandle /></TitleCell>
        {columns.slice(5).map((c) => <Cell key={c} />)}
      </Row>
      <Row>
        <RowHead>2</RowHead>
        {["氏名", "休暇日数", "申請済み", "残数", "次回休暇予定"].map((h) => <HeadingCell key={h}>{h}</HeadingCell>)}
        {columns.slice(5).map((c) => <Cell key={c} />)}
      </Row>
      {Array.from({ length: 18 }, (_, r) => (
        <Row key={r}>
          <RowHead>{r + 3}</RowHead>
          {columns.map((c, i) => (
            <Cell key={c} $align={i === 0 ? "left" : "right"}>{people[r]?.[i]}</Cell>
          ))}
        </Row>
      ))}
    </tbody>
  </Sheet>
);

const FindDialog = () => (
  <DialogWindow $x={496} $y={318} $w={540}>
    <DialogTitle $dim><DialogName>検索と置換</DialogName></DialogTitle>
    <DialogBody>
      <DialogTabs>
        <DialogTab $w={58}>検索(<u>D</u>)</DialogTab>
        <DialogTab $w={63} $on>置換(<u>P</u>)</DialogTab>
      </DialogTabs>
      <Panel>
        <FindStack>
          <FindField>
            <FindLabel $w={113} htmlFor="find-text">検索する文字列(<u>N</u>):</FindLabel>
            <TextField id="find-text" />
          </FindField>
          <FindField>
            <FindLabel $w={113} htmlFor="replace-text">置換後の文字列(<u>E</u>):</FindLabel>
            <TextField id="replace-text" />
          </FindField>
        </FindStack>
        <FindOptions>
          <FindStack>
            <FindField>
              <FindLabel $w={81} htmlFor="find-place">検索場所(<u>H</u>):</FindLabel>
              <Drop id="find-place" value="シート" w={60} h={25} />
            </FindField>
            <FindField>
              <FindLabel $w={81} htmlFor="find-direction">検索方向(<u>S</u>):</FindLabel>
              <Drop id="find-direction" value="行" w={60} h={25} />
            </FindField>
            <FindField>
              <FindLabel $w={81} htmlFor="find-target">検索対象(<u>L</u>):</FindLabel>
              <Drop id="find-target" value="数式" w={60} h={25} />
            </FindField>
          </FindStack>
          <Checks>
            <CheckLabel><CheckBox type="checkbox" />大文字と小文字を区別する</CheckLabel>
            <CheckLabel><CheckBox type="checkbox" />セル内容が完全に同一</CheckLabel>
            <CheckLabel><CheckBox type="checkbox" />半角と全角を区別する</CheckLabel>
          </Checks>
        </FindOptions>
      </Panel>
      <DialogFooter $indent={71}>
        <PushButton $w={88}>すべて置換(<u>A</u>)</PushButton>
        <PushButton $w={75}>置換(<u>R</u>)</PushButton>
      </DialogFooter>
    </DialogBody>
  </DialogWindow>
);

const FormatDialog = () => (
  <DialogWindow $x={747} $y={148} $w={526} $front>
    <DialogTitle>
      <DialogName>書式の変換</DialogName>
      <TitleControls>
        <button aria-label="ヘルプ">?</button>
        <button aria-label="閉じる"><CloseIcon c="#000" /></button>
      </TitleControls>
    </DialogTitle>
    <DialogBody>
      <DialogTabs>
        <DialogTab $w={64}>表示形式</DialogTab>
        <DialogTab $w={54}>配置</DialogTab>
        <DialogTab $w={54}>フォント</DialogTab>
        <DialogTab $w={53}>罫線</DialogTab>
        <DialogTab $w={70} $on>塗りつぶし</DialogTab>
        <DialogTab $w={50}>保護</DialogTab>
      </DialogTabs>
      <Panel>
        <FillOptions>
          <FillLeft>
            <FieldLabel htmlFor="no-color">背景色(<u>C</u>):</FieldLabel>
            <NoColor id="no-color">色なし</NoColor>
            <Swatches colors={baseColors} />
            <Divider />
            <Swatches colors={tintColors} selected={1} />
            <Divider />
            <Swatches colors={standardColors} />
            <ButtonLine>
              <PushButton $w={116}>塗りつぶし効果(<u>I</u>)...</PushButton>
              <PushButton $w={102}>その他の色(<u>M</u>)...</PushButton>
            </ButtonLine>
          </FillLeft>
          <PatternFields>
            <PatternField>
              <FieldLabel htmlFor="pattern-color">パターンの色(<u>A</u>):</FieldLabel>
              <Drop id="pattern-color" value="自動" w={174} h={26} center />
            </PatternField>
            <PatternField>
              <FieldLabel htmlFor="pattern-kind">パターンの種類(<u>P</u>):</FieldLabel>
              <Drop id="pattern-kind" value="" w={174} h={26} />
            </PatternField>
          </PatternFields>
        </FillOptions>
        <SampleBox>
          <SampleLegend>サンプル</SampleLegend>
          <SampleFill />
        </SampleBox>
        <PanelEnd><PushButton $w={74}>クリア(<u>R</u>)</PushButton></PanelEnd>
      </Panel>
      <DialogFooter>
        <PushButton $w={142}>セルから書式を選択(<u>A</u>)...</PushButton>
        <Spacer />
        <PushButton $w={74} $hot>OK</PushButton>
        <PushButton $w={74}>キャンセル</PushButton>
      </DialogFooter>
    </DialogBody>
    <RedFrame $x={37} $y={143} $w={33} $h={34} />
    <RedFrame $x={357} $y={529} $w={81} $h={40} />
    <StepBadge $x={80} $y={131}>6</StepBadge>
    <StepBadge $x={375} $y={482}>7</StepBadge>
  </DialogWindow>
);

export default function App() {
  return (
    <Shell>
      <GlobalStyle />
      <TitleBar>
        <TitleSide>
          <TitleButton $w={30} aria-label="上書き保存"><SaveIcon /></TitleButton>
          <TitleButton $w={28} aria-label="元に戻す"><UndoIcon /></TitleButton>
          <TitleButton $w={7} aria-label="元に戻す履歴"><Caret c="#fff" /></TitleButton>
          <TitleButton $w={28} $dim aria-label="やり直し"><UndoIcon flip /></TitleButton>
          <TitleButton $w={7} $dim aria-label="やり直し履歴"><Caret c="#5d9a77" /></TitleButton>
          <TitleButton $w={20} aria-label="タッチ"><TouchIcon /></TitleButton>
          <TitleButton $w={11} aria-label="タッチ モード"><Caret c="#fff" /></TitleButton>
          <TitleButton $w={33} aria-label="カスタマイズ"><CustomizeIcon /></TitleButton>
        </TitleSide>
        <TitleText>{"休暇申請.xlsx   -   Excel"}</TitleText>
        <TitleSide $end>
          <UserName>山田知美</UserName>
          <TitleButton $w={46} $dim aria-label="リボンの表示"><RibbonDisplayIcon /></TitleButton>
          <TitleButton $w={46} $dim aria-label="最小化"><MinimizeIcon /></TitleButton>
          <TitleButton $w={46} $dim aria-label="元のサイズ"><RestoreIcon /></TitleButton>
          <TitleButton $w={46} $dim aria-label="終了"><CloseIcon /></TitleButton>
        </TitleSide>
      </TitleBar>
      <TabBar>
        {tabs.map((t, i) => (
          <RibbonTab key={t.name} $w={t.w} $kana={t.kana} $active={i === 1}>{t.name}</RibbonTab>
        ))}
        <TellMe><BulbIcon />実行したい作業を入力してください</TellMe>
        <Share><ShareIcon />共有</Share>
      </TabBar>

      <RibbonBar />

      <FormulaRow>
        <NameBox><NameInput aria-label="名前ボックス" defaultValue="A1" /><Caret big /></NameBox>
        <Grip />
        <FormulaTools>
          <svg width="12" height="12" viewBox="0 0 12 12" stroke="#b8b8b8" strokeWidth="1.800"><path d="M1 1l10 10M11 1L1 11" /></svg>
          <svg width="14" height="12" viewBox="0 0 14 12" fill="none" stroke="#c0c0c0" strokeWidth="2.500"><path d="M1 6l4 4 8-9" /></svg>
          <svg width="14" height="14" viewBox="0 0 14 14" fill="none" stroke="#555" strokeWidth="1.400">
            <path d="M8 1.500C5.500 0 5 3 4.500 6S3 13.500.8 12.300M2 5h5M7.500 7c2-1 2 5 5 4M12.500 7c-2 0-3 4-5.500 4" />
          </svg>
        </FormulaTools>
        <FormulaBox>
          <FormulaInput aria-label="数式バー" defaultValue="製造課有給休暇申請一覧" />
          <Chevron c="#b0b0b0" w={8} bold />
        </FormulaBox>
      </FormulaRow>

      <Workspace>
        <GridView><Spreadsheet /></GridView>
        <VScroll>
          <ScrollButton aria-label="上へ"><Caret dir="up" big /></ScrollButton>
          <VThumb />
          <ScrollButton aria-label="下へ"><Caret big /></ScrollButton>
        </VScroll>
      </Workspace>

      <SheetBar>
        <SheetNav><Caret dir="left" c="#bdbdbd" /><Caret dir="right" c="#bdbdbd" /></SheetNav>
        <SheetTab>休暇申請</SheetTab>
        <AddSheet aria-label="新しいシート">
          <svg width="17" height="17" viewBox="0 0 17 17" fill="none" stroke="#777">
            <circle cx="8.500" cy="8.500" r="7.500" strokeWidth="1.200" /><path d="M8.500 4.500v8M4.500 8.500h8" strokeWidth="2" />
          </svg>
        </AddSheet>
        <HScroll>
          <Grip flush />
          <ScrollButton aria-label="左へ"><Caret dir="left" /></ScrollButton>
          <HTrack><HThumb /></HTrack>
          <ScrollButton aria-label="右へ"><Caret dir="right" /></ScrollButton>
        </HScroll>
      </SheetBar>

      <StatusBar>
        <StatusText>準備完了</StatusText>
        <MacroIcon />
        <StatusTools>
          <ViewButton $on aria-label="標準"><ViewIcon d="M.5.5h13v12H.5zM.5 4.500h13M.5 8.500h13M4.500.5v12M9.500.5v12" /></ViewButton>
          <ViewButton aria-label="ページ レイアウト"><ViewIcon d="M.5.5h13v12H.5zM3.500 2.500h7v8h-7zM5 4.500h4M5 6.500h4M5 8.500h4" /></ViewButton>
          <ViewButton aria-label="改ページ プレビュー"><ViewIcon d="M.5.5h13v12H.5zM.5 7.500h8v-7M4.500.5v7M8.500 7.500h5" /></ViewButton>
          <svg width="12" height="10" viewBox="0 0 12 10" stroke="#666" strokeWidth="2"><path d="M5 5h7" /></svg>
          <ZoomSlider type="range" aria-label="ズーム" defaultValue={50} />
          <svg width="8" height="10" viewBox="0 0 8 10" stroke="#666" strokeWidth="2"><path d="M0 5h8M4 1v8" /></svg>
          <ZoomValue>100%</ZoomValue>
        </StatusTools>
      </StatusBar>

      <FindDialog />
      <FormatDialog />
    </Shell>
  );
}
